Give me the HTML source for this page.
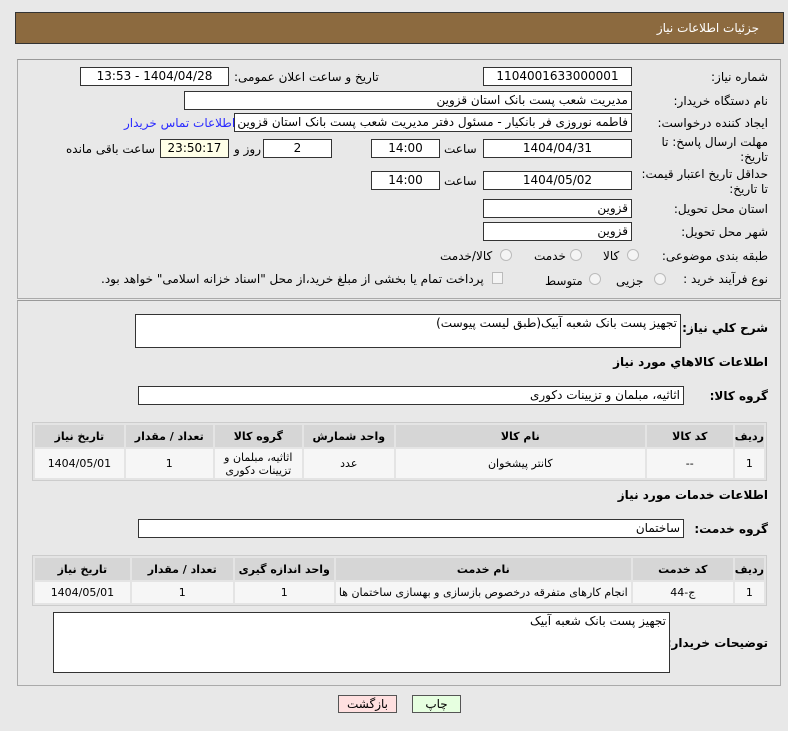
<!DOCTYPE html>
<html><head><meta charset="utf-8"><style>
*{margin:0;padding:0;box-sizing:border-box}
body{width:788px;height:731px;background:#e8e8e8;font-family:"DejaVu Sans",Tahoma,sans-serif;font-size:11px;color:#000;position:relative;overflow:hidden}
.a{position:absolute}
.hdr{left:15px;top:12px;width:769px;height:32px;background:#8c6a3f;border:1px solid #333}
.hdr span{position:absolute;right:24px;top:8px;color:#fff;font-size:12px}
.pnl{border:1px solid #aaa;border-top-color:#999}
.box{position:absolute;background:#fff;border:1px solid #333;height:19px;line-height:17px;text-align:center;direction:rtl;white-space:nowrap;overflow:hidden;font-size:12px}
.box.r{text-align:right;padding-right:3px}
.lbl{position:absolute;direction:rtl;white-space:nowrap;font-size:12px}
.b{font-weight:bold}
.rad{position:absolute;width:12px;height:12px;border-radius:50%;border:1px solid #bbb;background:#f4f4f4}
table{position:absolute;border-collapse:separate;border-spacing:2px;background:#e4e4e4;border:1px solid #ccc;direction:rtl;font-size:11px}
th{background:#d6d6d6;font-weight:bold;height:22px;text-align:center}
td{background:#f6f6f6;text-align:center}
.btn{position:absolute;height:18px;border:1px solid #555;text-align:center;line-height:16px;font-size:12px}
</style></head><body>
<div class="a hdr"><span>جزئیات اطلاعات نیاز</span></div>
<div class="a pnl" style="left:17px;top:59px;width:764px;height:240px"></div>
<div class="a pnl" style="left:17px;top:300px;width:764px;height:386px"></div>

<div class="lbl" style="right:20px;top:70px">شماره نیاز:</div>
<div class="box" style="left:483px;top:67px;width:149px">1104001633000001</div>
<div class="lbl" style="left:234px;top:70px">تاریخ و ساعت اعلان عمومی:</div>
<div class="box" style="left:80px;top:67px;width:149px">1404/04/28 - 13:53</div>

<div class="lbl" style="right:20px;top:94px">نام دستگاه خریدار:</div>
<div class="box r" style="left:184px;top:91px;width:448px">مدیریت شعب پست بانک استان قزوین</div>

<div class="lbl" style="right:20px;top:116px">ایجاد کننده درخواست:</div>
<div class="box r" style="left:234px;top:113px;width:398px">فاطمه نوروزی فر بانکیار - مسئول دفتر مدیریت شعب پست بانک استان قزوین</div>
<div class="lbl" style="left:124px;top:116px;color:#2a2aff">اطلاعات تماس خریدار</div>

<div class="lbl" style="right:20px;top:135px;line-height:15px">مهلت ارسال پاسخ: تا<br>تاریخ:</div>
<div class="box" style="left:483px;top:139px;width:149px">1404/04/31</div>
<div class="lbl" style="left:444px;top:142px">ساعت</div>
<div class="box" style="left:371px;top:139px;width:69px">14:00</div>
<div class="box" style="left:263px;top:139px;width:69px">2</div>
<div class="lbl" style="left:234px;top:142px">روز و</div>
<div class="box" style="left:160px;top:139px;width:69px;background:#ffffe8">23:50:17</div>
<div class="lbl" style="left:66px;top:142px">ساعت باقی مانده</div>

<div class="lbl" style="right:20px;top:167px;line-height:15px">حداقل تاریخ اعتبار قیمت:<br>تا تاریخ:</div>
<div class="box" style="left:483px;top:171px;width:149px">1404/05/02</div>
<div class="lbl" style="left:444px;top:174px">ساعت</div>
<div class="box" style="left:371px;top:171px;width:69px">14:00</div>

<div class="lbl" style="right:20px;top:202px">استان محل تحویل:</div>
<div class="box r" style="left:483px;top:199px;width:149px">قزوین</div>
<div class="lbl" style="right:20px;top:225px">شهر محل تحویل:</div>
<div class="box r" style="left:483px;top:222px;width:149px">قزوین</div>

<div class="lbl" style="right:20px;top:249px">طبقه بندی موضوعی:</div>
<div class="rad" style="left:627px;top:249px"></div><div class="lbl" style="left:603px;top:249px">کالا</div>
<div class="rad" style="left:570px;top:249px"></div><div class="lbl" style="left:534px;top:249px">خدمت</div>
<div class="rad" style="left:500px;top:249px"></div><div class="lbl" style="left:440px;top:249px">کالا/خدمت</div>

<div class="lbl" style="right:20px;top:272px">نوع فرآیند خرید :</div>
<div class="rad" style="left:654px;top:273px"></div><div class="lbl" style="left:616px;top:274px">جزیی</div>
<div class="rad" style="left:589px;top:273px"></div><div class="lbl" style="left:545px;top:274px">متوسط</div>
<div class="a" style="left:492px;top:272px;width:11px;height:12px;border:1px solid #bbb;background:#f4f4f4"></div>
<div class="lbl" style="left:101px;top:272px">پرداخت تمام یا بخشی از مبلغ خرید،از محل "اسناد خزانه اسلامی" خواهد بود.</div>

<div class="lbl b" style="right:20px;top:321px">شرح کلي نياز:</div>
<div class="box r" style="left:135px;top:314px;width:546px;height:34px;text-align:right">تجهیز پست بانک شعبه آبیک(طبق لیست پیوست)</div>

<div class="lbl b" style="right:20px;top:355px">اطلاعات کالاهاي مورد نياز</div>
<div class="lbl b" style="right:20px;top:389px">گروه کالا:</div>
<div class="box r" style="left:138px;top:386px;width:546px">اثاثیه، مبلمان و تزیینات دکوری</div>

<table style="left:32px;top:422px;width:735px;height:59px">
<tr><th style="width:25px">ردیف</th><th style="width:86px">کد کالا</th><th style="width:249px">نام کالا</th><th style="width:90px">واحد شمارش</th><th style="width:87px">گروه کالا</th><th style="width:87px">تعداد / مقدار</th><th>تاریخ نیاز</th></tr>
<tr><td>1</td><td>--</td><td>کانتر پیشخوان</td><td>عدد</td><td style="line-height:13px">اثاثیه، مبلمان و<br>تزیینات دکوری</td><td>1</td><td>1404/05/01</td></tr>
</table>

<div class="lbl b" style="right:20px;top:488px">اطلاعات خدمات مورد نياز</div>
<div class="lbl b" style="right:20px;top:522px">گروه خدمت:</div>
<div class="box r" style="left:138px;top:519px;width:546px">ساختمان</div>

<table style="left:32px;top:555px;width:735px;height:51px">
<tr><th style="width:25px">ردیف</th><th style="width:100px">کد خدمت</th><th style="width:295px">نام خدمت</th><th style="width:99px">واحد اندازه گیری</th><th style="width:101px">تعداد / مقدار</th><th>تاریخ نیاز</th></tr>
<tr><td>1</td><td>ج-44</td><td>انجام کارهای متفرقه درخصوص بازسازی و بهسازی ساختمان ها</td><td>1</td><td>1</td><td>1404/05/01</td></tr>
</table>

<div class="lbl b" style="right:20px;top:636px">توضیحات خریدار:</div>
<div class="box r" style="left:53px;top:612px;width:617px;height:61px;text-align:right">تجهیز پست بانک شعبه آبیک</div>

<div class="btn" style="left:338px;top:695px;width:59px;background:#ffe0e0">بازگشت</div>
<div class="btn" style="left:412px;top:695px;width:49px;background:#e6ffe0">چاپ</div>
</body></html>
